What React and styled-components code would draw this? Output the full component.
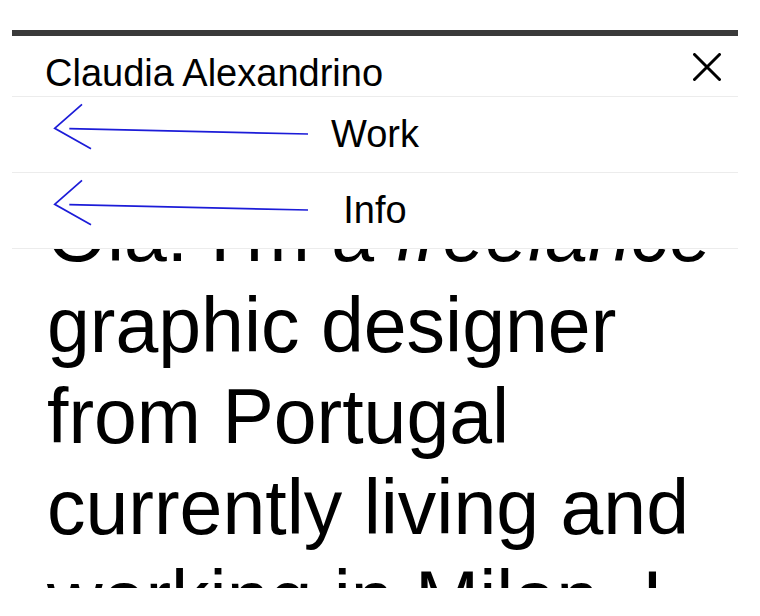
import React from 'react'
import styled, { createGlobalStyle } from 'styled-components'

const GlobalStyle = createGlobalStyle`
  html, body {
    margin: 0;
    padding: 0;
    background: #fff;
  }
  body {
    font-family: "Liberation Sans", Arial, sans-serif;
    color: #000;
  }
`

const Arrow = () => (
  <ArrowSvg viewBox="0 0 260 50" width="260" height="50">
    <polyline points="30,1.3 2.7,25.3 39,45.7" />
    <line x1="17.3" y1="25.7" x2="256" y2="31" />
  </ArrowSvg>
)

const CloseIcon = () => (
  <svg viewBox="0 0 28 28" width="28" height="28">
    <path d="M1.5 1.5 L26.5 26.5 M26.5 1.5 L1.5 26.5" stroke="#000" strokeWidth="3" strokeLinecap="round" fill="none" />
  </svg>
)

const items = ['Work', 'Info']

const App = () => {
  return (
    <Page>
      <GlobalStyle />
      <Main>
        <Intro>
          Olá! I'm a <em>freelance</em> graphic designer from Portugal currently living and working in Milan. I
          work across print, identity and digital projects.
        </Intro>
      </Main>
      <Menu>
        <Header>
          <Name>Claudia Alexandrino</Name>
          <CloseButton aria-label="Close menu">
            <CloseIcon />
          </CloseButton>
        </Header>
        {items.map((item) => (
          <Row key={item}>
            <Arrow />
            <Label>{item}</Label>
          </Row>
        ))}
      </Menu>
    </Page>
  )
}

const Page = styled.div`
  position: relative;
  width: 760px;
  height: 616px;
  overflow: hidden;
`

const Main = styled.main`
  height: 588px;
  overflow: hidden;
  box-sizing: border-box;
  padding: 189px 0 0 47px;
`

const Intro = styled.p`
  margin: 0;
  max-width: 700px;
  font-size: 77px;
  line-height: 91px;
  font-weight: 400;
  em {
    font-style: italic;
  }
`

const Menu = styled.nav`
  position: absolute;
  top: 30px;
  left: 12px;
  width: 726px;
  background: #fff;
  border-top: 6px solid #3a3a3a;
`

const Header = styled.div`
  display: flex;
  justify-content: space-between;
  align-items: flex-start;
  padding: 15px 17px 1px 33px;
  border-bottom: 1px solid #ececec;
`

const Name = styled.div`
  font-size: 38px;
  line-height: 44px;
  color: #000;
`

const CloseButton = styled.button`
  margin-top: 2px;
  padding: 0;
  border: 0;
  background: none;
  display: flex;
  cursor: pointer;
`

const Row = styled.div`
  display: grid;
  grid-template-columns: 1fr auto 1fr;
  height: 75px;
  border-bottom: 1px solid #ececec;
`

const ArrowSvg = styled.svg`
  grid-column: 1;
  margin: 6px 0 0 40px;
  fill: none;
  stroke: #1c1cd8;
  stroke-width: 1.7;
  overflow: visible;
`

const Label = styled.div`
  grid-column: 2;
  font-size: 38px;
  line-height: 75px;
  color: #000;
`

export default App
